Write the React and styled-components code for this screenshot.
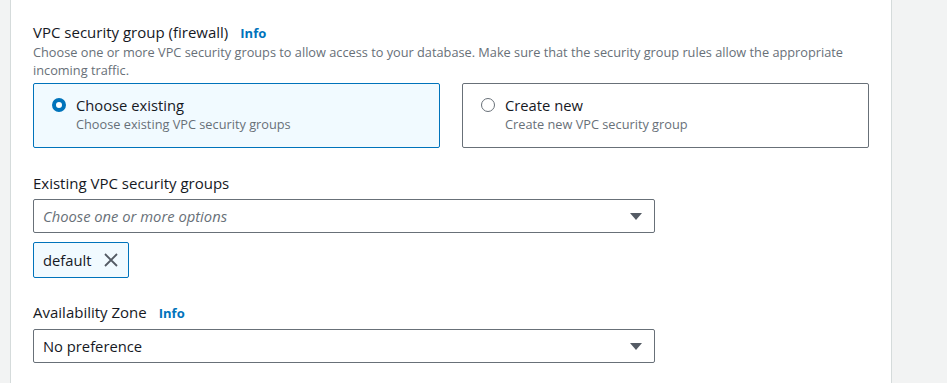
import React from 'react'
import styled, { createGlobalStyle } from 'styled-components'

const GlobalStyle = createGlobalStyle`
  body {
    margin: 0;
    background: #f2f3f3;
    font-family: "Open Sans", "Noto Sans", sans-serif;
    color: #16191f;
  }
`

const Page = styled.div`
  display: flex;
  padding-left: 10px;
  min-height: 383px;
`

const Panel = styled.div`
  width: 882px;
  box-sizing: border-box;
  background: #ffffff;
  border-left: 1px solid #d5dbdb;
  border-right: 1px solid #d5dbdb;
  padding: 22px 22px 0 22px;
`

const Field = styled.div`
  display: flex;
  flex-direction: column;
  margin-bottom: ${p => p.$gap || 0}px;
`

const Label = styled.div`
  font-size: 15px;
  line-height: 20px;
  display: flex;
  align-items: baseline;
  gap: 12px;
`

const InfoLink = styled.a`
  font-size: 13px;
  font-weight: 700;
  color: #0073bb;
  text-decoration: none;
`

const Description = styled.div`
  font-size: 12.75px;
  line-height: 18px;
  color: #687078;
`

const Tiles = styled.div`
  display: grid;
  grid-template-columns: 1fr 1fr;
  gap: 22px;
  margin-top: 4px;
`

const Tile = styled.div`
  display: flex;
  gap: 10px;
  padding: 11px 18px 14px 18px;
  border: 1px solid ${p => (p.$selected ? '#0073bb' : '#687078')};
  background: ${p => (p.$selected ? '#f1faff' : '#ffffff')};
  border-radius: 2px;
`

const Radio = styled.span`
  flex: none;
  width: 14px;
  height: 14px;
  margin-top: 3px;
  box-sizing: border-box;
  border-radius: 50%;
  border: ${p => (p.$checked ? '4px solid #0073bb' : '1.5px solid #687078')};
  background: #ffffff;
`

const TileText = styled.div`
  display: flex;
  flex-direction: column;
`

const TileTitle = styled.div`
  font-size: 14.75px;
  line-height: 20px;
`

const Select = styled.div`
  width: 622px;
  height: 34px;
  box-sizing: border-box;
  display: flex;
  align-items: center;
  justify-content: space-between;
  padding: 0 12px 0 9px;
  border: 1px solid #687078;
  border-radius: 2px;
  margin-top: 6px;
  font-size: 14.75px;
  color: ${p => (p.$placeholder ? '#687078' : '#16191f')};
  font-style: ${p => (p.$placeholder ? 'italic' : 'normal')};
`

const Caret = styled.span`
  width: 0;
  height: 0;
  border-left: 6px solid transparent;
  border-right: 6px solid transparent;
  border-top: 7px solid #545b64;
`

const Token = styled.div`
  align-self: flex-start;
  display: flex;
  align-items: center;
  gap: 12px;
  height: 36px;
  box-sizing: border-box;
  margin-top: 9px;
  padding: 0 10px 0 9px;
  border: 1px solid #0073bb;
  border-radius: 2px;
  background: #f1faff;
  font-size: 14.75px;
`

const Dismiss = styled.svg`
  width: 14px;
  height: 14px;
  display: block;
`

export default function App() {
  return (
    <>
      <GlobalStyle />
      <Page>
        <Panel>
          <Field $gap={25}>
            <Label>
              VPC security group (firewall)
              <InfoLink href="#">Info</InfoLink>
            </Label>
            <Description>
              Choose one or more VPC security groups to allow access to your database. Make sure that the security group rules allow the appropriate incoming traffic.
            </Description>
            <Tiles>
              <Tile $selected>
                <Radio $checked />
                <TileText>
                  <TileTitle>Choose existing</TileTitle>
                  <Description>Choose existing VPC security groups</Description>
                </TileText>
              </Tile>
              <Tile>
                <Radio />
                <TileText>
                  <TileTitle>Create new</TileTitle>
                  <Description>Create new VPC security group</Description>
                </TileText>
              </Tile>
            </Tiles>
          </Field>
          <Field $gap={24}>
            <Label>Existing VPC security groups</Label>
            <Select $placeholder>
              Choose one or more options
              <Caret />
            </Select>
            <Token>
              default
              <Dismiss viewBox="0 0 14 14">
                <path d="M1 1 L13 13 M13 1 L1 13" stroke="#545b64" strokeWidth="1.8" fill="none" />
              </Dismiss>
            </Token>
          </Field>
          <Field>
            <Label>
              Availability Zone
              <InfoLink href="#">Info</InfoLink>
            </Label>
            <Select>
              No preference
              <Caret />
            </Select>
          </Field>
        </Panel>
      </Page>
    </>
  )
}
